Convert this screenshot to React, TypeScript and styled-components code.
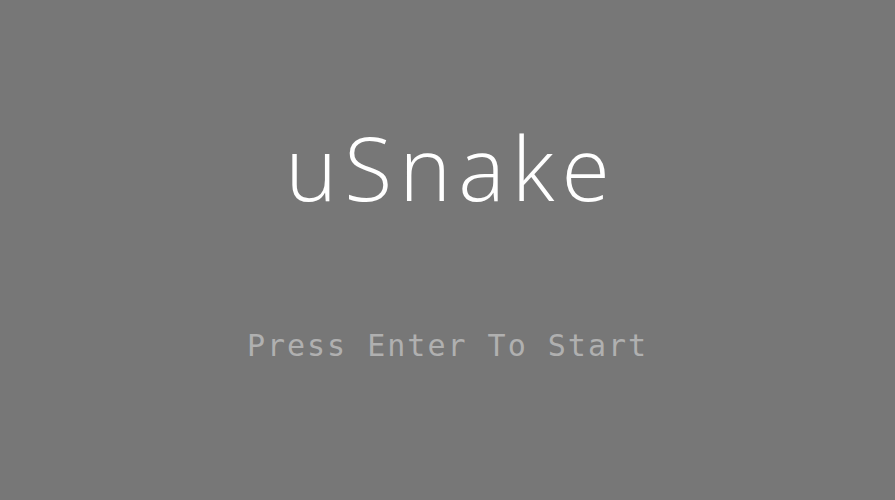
import { FC } from "react";
import styled, { createGlobalStyle } from "styled-components";

const GlobalStyle = createGlobalStyle`
    html, body {
        margin: 0;
        padding: 0;
        background: #777777;
    }
`

const Screen = styled.main`
    display: flex;
    flex-direction: column;
    align-items: center;
    height: 500px;
    width: 100%;
    background: #777777;
    overflow: hidden;
`
const Title = styled.h1`
    margin: 117px 0 0 0;
    font-family: "Open Sans", "Noto Sans", sans-serif;
    font-weight: 300;
    font-size: 88px;
    line-height: 100px;
    color: #ffffff;
    letter-spacing: 7px;
    padding-left: 7px;
`
const Prompt = styled.p`
    margin: 109px 0 0 0;
    font-family: "DejaVu Sans Mono", "Liberation Mono", monospace;
    font-size: 30px;
    line-height: 40px;
    color: #b0b0b0;
    letter-spacing: 2px;
`

const App: FC = () => {
    return (
        <Screen>
            <GlobalStyle />
            <Title>uSnake</Title>
            <Prompt>Press Enter To Start</Prompt>
        </Screen>
    )
}

export default App;
